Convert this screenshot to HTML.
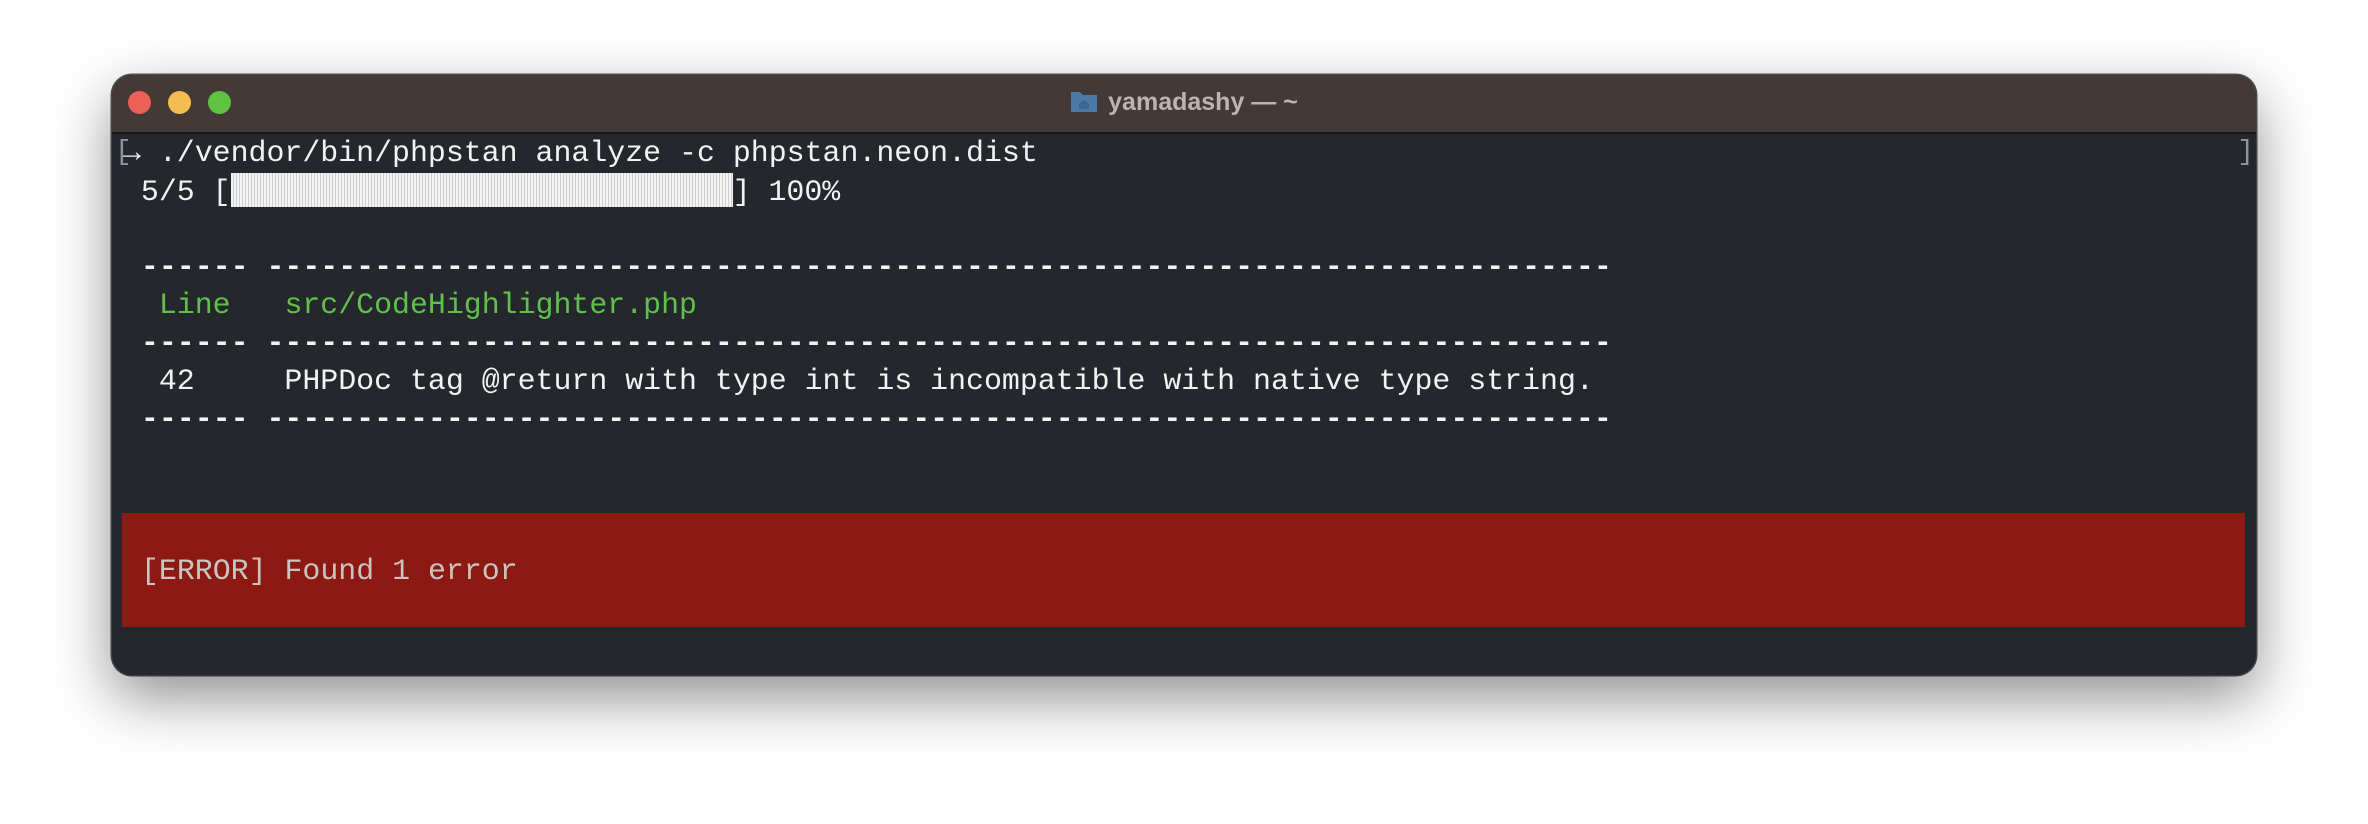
<!DOCTYPE html>
<html><head><meta charset="utf-8"><style>
html,body{margin:0;padding:0;background:#fff;width:2368px;height:824px;overflow:hidden;position:relative}
.win{position:absolute;left:112px;top:75px;width:2144px;height:600px;border-radius:20px;background:#24272c;box-shadow:0 22px 60px rgba(0,0,0,.45),0 0 0 1.5px #555;overflow:hidden}
.tb{position:absolute;left:0;top:0;right:0;height:57px;background:#433a37;border-bottom:2px solid #1a1a1a}
.dot{position:absolute;top:16px;width:23px;height:23px;border-radius:50%}
.title{position:absolute;left:0;right:0;top:13px;text-align:center;font:bold 25px "Liberation Sans",sans-serif;color:#bdb4b0}
.term{position:absolute;left:11px;top:60px;font:29.9px/37.8px "Liberation Mono",monospace;color:#f2f2f2;white-space:pre}
.g{color:#5fc04a}
.d{font-weight:bold}
.bar{display:inline-block;width:502px;height:34px;vertical-align:-7px;background:repeating-linear-gradient(90deg,#f4f4f4 0 2px,#cfcfcf 2px 3px),#eee}
.red{position:absolute;left:10px;top:438px;width:2123px;height:114px;background:#8c1a12}
.err{position:absolute;left:29px;top:478px;font:29.9px/37.8px "Liberation Mono",monospace;color:#cbc3bf;white-space:pre}
</style></head><body>
<div class="win">
 <div class="tb">
  <div class="dot" style="left:16px;background:#ee5f57"></div>
  <div class="dot" style="left:56px;background:#f4bd4f"></div>
  <div class="dot" style="left:96px;background:#5ec342"></div>
  <div class="title"><svg width="28" height="24" viewBox="0 0 28 24" style="vertical-align:-3px;margin-right:10px"><path d="M1 3h9l3 3h14v17H1z" fill="#4a7aa5"/><path d="M9 15l5-4 5 4v5h-10z" fill="#3d6690"/></svg>yamadashy — ~</div>
 </div>
 <div style="position:absolute;left:3px;top:62px;font:28px 'Liberation Mono',monospace;color:#8a93a0">[</div>
 <div style="position:absolute;right:2px;top:62px;font:28px 'Liberation Mono',monospace;color:#8a93a0">]</div>
 <div class="term">→ ./vendor/bin/phpstan analyze -c phpstan.neon.dist
 5/5 [<span class="bar"></span>] 100%

<span class="d"> ------ ---------------------------------------------------------------------------</span>
  <span class="g">Line</span>   <span class="g">src/CodeHighlighter.php</span>
<span class="d"> ------ ---------------------------------------------------------------------------</span>
  42     PHPDoc tag @return with type int is incompatible with native type string.
<span class="d"> ------ ---------------------------------------------------------------------------</span></div>
 <div class="red"></div>
 <div class="err">[ERROR] Found 1 error</div>
</div>
</body></html>
